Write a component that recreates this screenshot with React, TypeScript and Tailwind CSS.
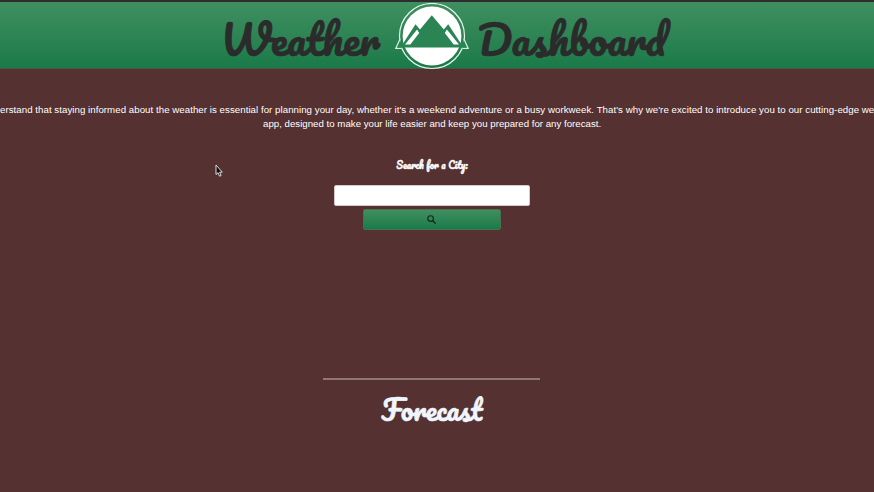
import React from "react";

const script = "font-['Pacifico',cursive] font-normal";

function Logo() {
  return (
    <svg viewBox="0 0 74 67" className="mt-[0.5px] h-[67px] w-[74px] shrink-0" fill="none">
      <circle cx="37" cy="33" r="32.5" stroke="#e9f7ee" strokeWidth="1.2" />
      <path d="M5 36 0.9 45.3H6.4M69 36 73.1 45.3H67.6" stroke="#dcefe2" strokeWidth="1.2" fill="#2a8453" />
      <circle cx="37" cy="33" r="29.4" fill="#fff" />
      <path d="M2.5 44.6 6 37.5 10 44.6ZM71.5 44.6 68 37.5 64 44.6Z" fill="#2a8453" />
      <path d="M5.5 44.6 20.5 21.3 25 26.4 36.8 12.3 48.8 26.4 53.2 21.3 68.5 44.6Z" fill="#2a8453" />
      <path d="M10 41.5 22.1 26.5 24.2 30 15.3 41.5ZM64 41.5 51.9 26.5 49.8 30 58.7 41.5Z" fill="#fff" />
    </svg>
  );
}

export default function App() {
  return (
    <div className="relative h-[492px] w-[874px] overflow-hidden bg-[#553131] font-['Liberation_Sans',Arial,sans-serif] text-white">
      <header className="flex h-[69px] items-start justify-center border-b border-t-2 border-b-[#4c5940] border-t-[#2d2d2f] bg-linear-to-b from-[#3f8f60] to-[#197a49] pl-[14px]">
        <h1 className={`${script} flex text-[41.3px] leading-[73px] text-[#2a2b2a] [-webkit-text-stroke:0.7px_#2a2b2a]`}>
          <span className="w-[157px] whitespace-nowrap">Weather</span>
          <span className="ml-[17.5px] mr-[8.5px] block"><Logo /></span>
          <span className="w-[190px] whitespace-nowrap">Dashboard</span>
        </h1>
      </header>
      <main className="flex flex-col items-center pr-[10px]">
        <div className="mt-[34px] w-[874px] self-start whitespace-nowrap text-[9.7px] leading-[14px]">
          <p className="tracking-[0.04px]">erstand that staying informed about the weather is essential for planning your day, whether it's a weekend adventure or a busy workweek. That's why we're excited to introduce you to our cutting-edge we</p>
          <p className="pl-[263px]">app, designed to make your life easier and keep you prepared for any forecast.</p>
        </div>
        <label htmlFor="city" className={`${script} mt-[26px] h-[28px] text-[9.6px] leading-[15px] [-webkit-text-stroke:0.4px_#fff]`}>Search for a City:</label>
        <input id="city" className="mt-[0px] h-[21px] w-[196px] rounded-[2px] border border-[#d8c9cb] bg-white outline-none" />
        <button className="mt-[3px] flex h-[21px] w-[138px] items-center justify-center rounded-[2px] border border-[#4b7050] bg-linear-to-b from-[#3f8f60] to-[#197a49]">
          <svg viewBox="0 0 9 9" className="mr-px size-[9px]" fill="none" stroke="#14251b" strokeLinecap="round">
            <circle cx="3.6" cy="3.6" r="2.8" strokeWidth="1.1" />
            <path d="m5.8 5.8 2.4 2.4" strokeWidth="1.3" />
          </svg>
        </button>
        <hr className="mr-px mt-[148px] h-[2px] w-[217px] border-0 bg-[#8f7773]" />
        <h2 className={`${script} mt-[9px] text-[27.5px] leading-[40px] text-[#f0f6ff] [-webkit-text-stroke:0.6px_#f0f6ff]`}>Forecast</h2>
      </main>
      <svg viewBox="0 0 8 13" className="absolute left-[214.5px] top-[164px] h-[13px] w-[8px]">
        <path d="M1 1v9.5l2-1.8 1.5 3.5 1.6-.7-1.5-3.3h2.7Z" fill="#111" stroke="#eee" strokeWidth=".9" />
      </svg>
    </div>
  );
}
